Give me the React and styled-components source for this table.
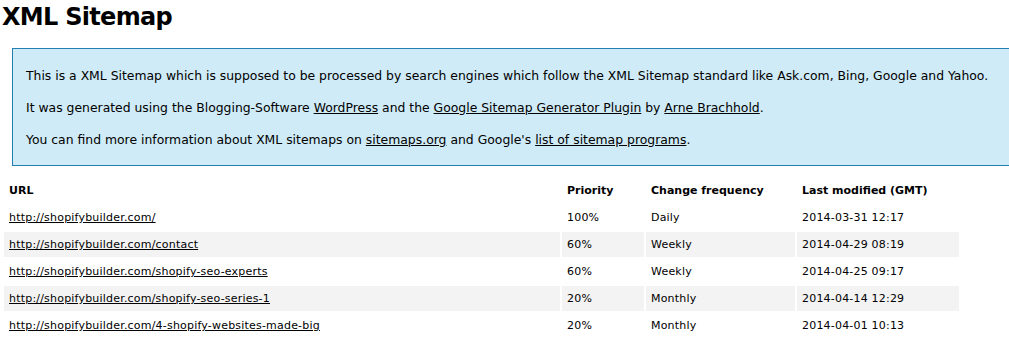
import styled, { createGlobalStyle } from "styled-components";

const urls = [
  { loc: "http://shopifybuilder.com/", priority: "100%", freq: "Daily", mod: "2014-03-31 12:17" },
  { loc: "http://shopifybuilder.com/contact", priority: "60%", freq: "Weekly", mod: "2014-04-29 08:19" },
  { loc: "http://shopifybuilder.com/shopify-seo-experts", priority: "60%", freq: "Weekly", mod: "2014-04-25 09:17" },
  { loc: "http://shopifybuilder.com/shopify-seo-series-1", priority: "20%", freq: "Monthly", mod: "2014-04-14 12:29" },
  { loc: "http://shopifybuilder.com/4-shopify-websites-made-big", priority: "20%", freq: "Monthly", mod: "2014-04-01 10:13" },
];

const columns = [
  { label: "URL", width: 556 },
  { label: "Priority", width: 82 },
  { label: "Change frequency", width: 149 },
  { label: "Last modified (GMT)", width: 162 },
];

const App = () => {
  return (
    <Page>
      <GlobalStyle />
      <Heading>XML Sitemap</Heading>

      <Intro>
        <p>
          This is a XML Sitemap which is supposed to be processed by search engines which follow the XML
          Sitemap standard like Ask.com, Bing, Google and Yahoo.
        </p>
        <p>
          It was generated using the Blogging-Software <a href="#">WordPress</a> and the{" "}
          <a href="#">Google Sitemap Generator Plugin</a> by <a href="#">Arne Brachhold</a>.
        </p>
        <p>
          You can find more information about XML sitemaps on <a href="#">sitemaps.org</a> and Google's{" "}
          <a href="#">list of sitemap programs</a>.
        </p>
      </Intro>

      <Table>
        <thead>
          <tr>
            {columns.map((col) => (
              <Th key={col.label} $width={col.width}>
                {col.label}
              </Th>
            ))}
          </tr>
        </thead>
        <tbody>
          {urls.map((u, i) => (
            <Row key={i} $high={i % 2 === 1}>
              <Td>
                <a href="#">{u.loc}</a>
              </Td>
              <Td>{u.priority}</Td>
              <Td>{u.freq}</Td>
              <Td>{u.mod}</Td>
            </Row>
          ))}
        </tbody>
      </Table>
    </Page>
  );
};

export default App;

// ===== Styled Components =====
const GlobalStyle = createGlobalStyle`
  html, body {
    margin: 0;
    overflow: hidden;
    background: #ffffff;
  }

  body {
    font-family: "DejaVu Sans", Verdana, sans-serif;
    font-size: 12.4px;
    color: #000000;
  }

  a {
    color: #000000;
  }
`;

const Page = styled.div`
  width: 1040px;
  padding: 0 2px;
`;

const Heading = styled.h1`
  margin: 3px 0 17px 0;
  font-size: 24px;
  line-height: 28px;
  letter-spacing: -0.7px;
  font-weight: bold;
`;

const Intro = styled.div`
  margin: 10px;
  padding: 6px 13px 4px 13px;
  background-color: #cfebf7;
  border: 1px solid #2580b2;

  p {
    margin: 10px 0;
    line-height: 22px;
    white-space: nowrap;
  }
`;

const Table = styled.table`
  width: 959px;
  table-layout: fixed;
  border-spacing: 2px;
`;

const Th = styled.th`
  box-sizing: border-box;
  width: ${(p) => p.$width}px;
  padding: 5px;
  text-align: left;
  font-size: 11px;
  line-height: 15px;
  font-weight: bold;
`;

const Row = styled.tr`
  background-color: ${(p) => (p.$high ? "#f3f3f3" : "transparent")};
`;

const Td = styled.td`
  padding: 5px;
  font-size: 11px;
  line-height: 15px;
  letter-spacing: 0.2px;
  white-space: nowrap;
`;
